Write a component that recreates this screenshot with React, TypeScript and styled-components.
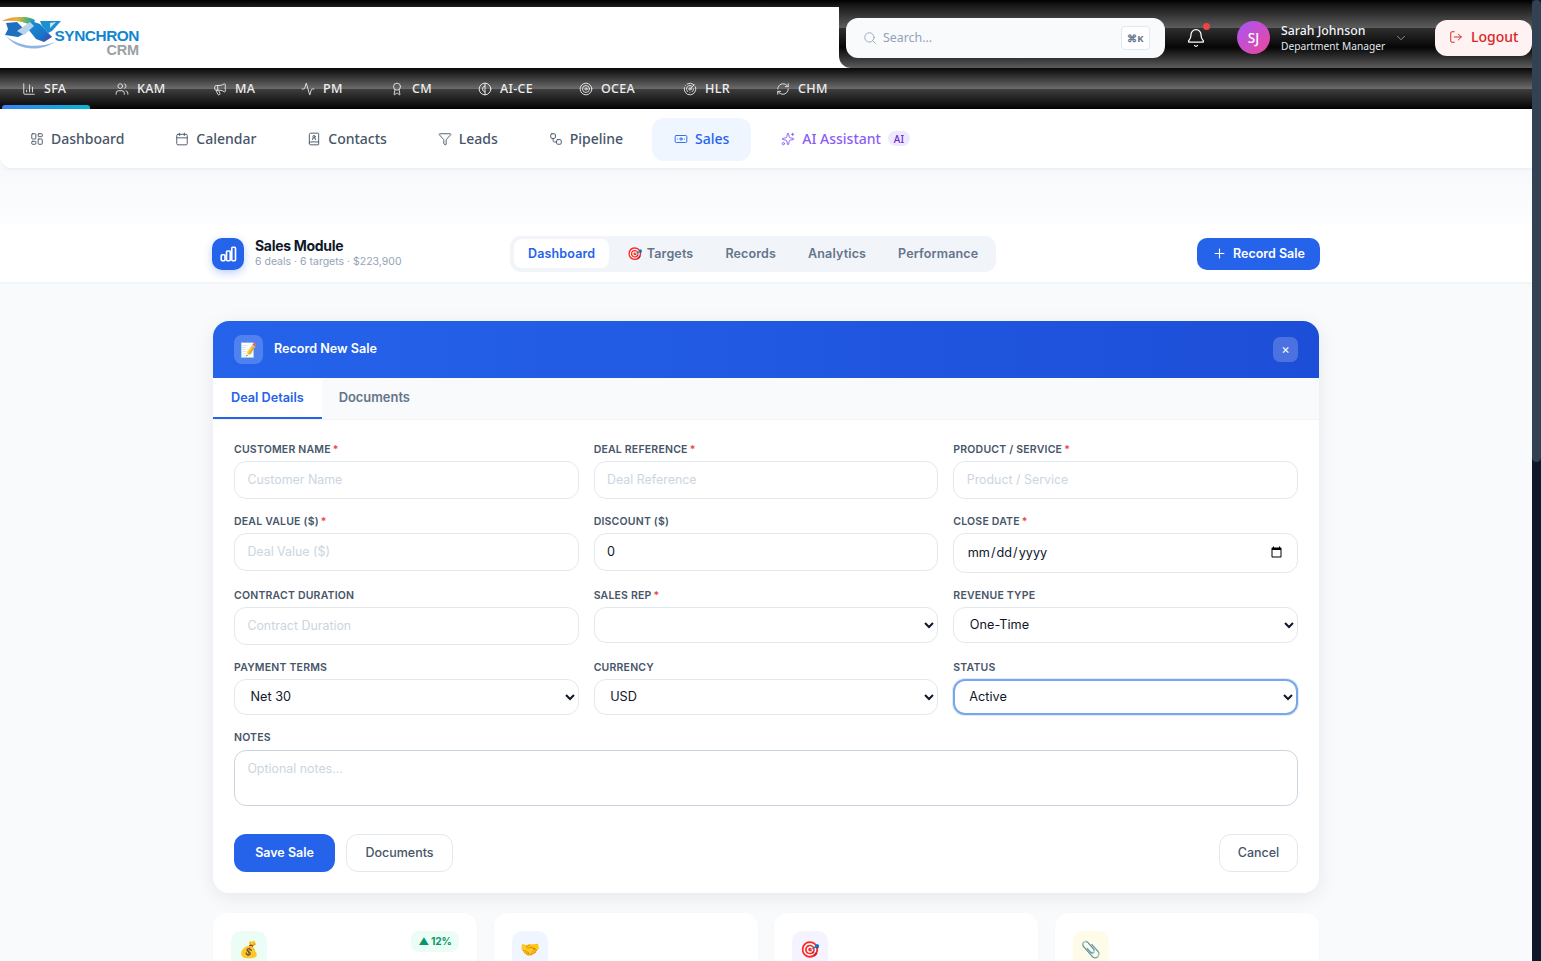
import React from "react";
import styled, { createGlobalStyle } from "styled-components";
import {
  Activity, Award, Banknote, Bell, BookUser, Calendar, ChartColumn, ChevronDown, Funnel,
  LayoutDashboard, LogOut, Megaphone, Plus, Radar, RefreshCw, Search, Sparkles, Target, Users, Workflow,
} from "lucide-react";

const Global = createGlobalStyle`
  html, body { margin: 0; padding: 0; height: 961px; overflow: hidden; background: #f8fafc; }
  * { box-sizing: border-box; }
  body { font-family: "Inter", "Liberation Sans", sans-serif; }
  input::placeholder, textarea::placeholder { color: #cbd5e1; opacity: 1; font-size: 12.4px; }
`;

const Shell = styled.div`display: flex; width: 1541px; height: 961px; overflow: hidden;`;
const Page = styled.div`width: 1532px; height: 961px; overflow: hidden; flex: none; background: #f8fafc;`;
const ScrollTrack = styled.div`width: 9px; flex: none; height: 961px; background: #0f172a;`;
const ScrollThumb = styled.div`width: 9px; height: 462px; background: #334155; border-radius: 5px;`;

const TopStrip = styled.div`height: 7px; background: linear-gradient(180deg, #000, #1e1e1e);`;
const Header = styled.header`display: flex; height: 61px; background: #fff;`;
const LogoArea = styled.div`width: 839px; flex: none; display: flex; align-items: flex-start; position: relative;`;
const LogoText = styled.div`
  position: absolute; left: 49px; top: 21px; font-family: "Liberation Sans", sans-serif; font-weight: 700;
  color: #1186cf; font-size: 15.4px; line-height: 16px; letter-spacing: -0.45px; width: 90px; text-align: right;
`;
const LogoSub = styled.div`color: #9aa0a6; font-size: 14.5px; line-height: 13px; letter-spacing: -0.2px;`;
const DarkArea = styled.div`
  flex: 1; display: flex; align-items: center; position: relative; min-width: 0; padding-left: 7px;
  border-bottom-left-radius: 12px;
  background: linear-gradient(180deg, #1c1c1c 0%, #5c5c5c 34%, #2e2e2e 35%, #060606 66%, #5c5c5c 100%);
`;
const SearchBox = styled.div`
  width: 319px; height: 40px; border-radius: 12px; background: #f8fafc; display: flex; align-items: center;
  padding: 0 15px 0 17px; color: #94a3b8; flex: none; margin-top: 1px;
`;
const SearchText = styled.span`flex: 1; margin: -2px 0 0 6px; font: 400 12.4px "Noto Sans", sans-serif; color: #94a3b8;`;
const Kbd = styled.span`
  width: 29px; height: 24px; background: #fff; border: 1px solid #e2e8f0; border-radius: 4px; color: #64748b;
  display: flex; align-items: center; justify-content: center; font: 700 9.5px "Noto Sans", sans-serif;
`;
const BellWrap = styled.div`position: relative; margin-left: 21px; width: 20px; height: 20px; color: #fff; display: flex;`;
const BellDot = styled.span`
  position: absolute; top: -5px; right: -4px; width: 7px; height: 7px; border-radius: 50%; background: #ef4444;
`;
const Avatar = styled.div`
  width: 33px; height: 33px; margin-left: 31px; border-radius: 50%; flex: none; color: #fff;
  background: linear-gradient(135deg, #a855f7, #ec4899);
  display: flex; align-items: center; justify-content: center; font: 500 13.5px "Noto Sans", sans-serif;
`;
const UserInfo = styled.div`margin: 1px 0 0 11px; width: 112px; color: #fff; font-family: "Noto Sans", sans-serif;`;
const UserName = styled.div`font-size: 12.3px; font-weight: 500; line-height: 16px; color: #f1f5f9;`;
const UserRole = styled.div`font-size: 10.2px; line-height: 15px; color: #e2e8f0; white-space: nowrap;`;
const Chevron = styled.span`display: flex; color: #94a3b8; margin-left: 3px;`;
const LogoutBtn = styled.button`
  margin-left: 27px; width: 97px; height: 36px; flex: none; border: none; border-radius: 12px; background: #fef2f2;
  color: #dc2626; display: flex; align-items: center; gap: 8px; padding: 0 0 2px 14px;
  font: 500 14px "Noto Sans", sans-serif;
`;

const ModuleBar = styled.nav`
  height: 41px; display: flex; padding-left: 2px; font-family: "Noto Sans", sans-serif;
  background: linear-gradient(180deg, #080808 0%, #6a6a6a 50%, #404040 50%, #030303 100%);
`;
const ModuleItem = styled.div<{ $w: number; $active?: boolean }>`
  width: ${(p) => p.$w}px; flex: none; height: 41px; display: flex; align-items: center; gap: 8px; padding-left: 20px;
  color: #eeeeee; font-size: 12.5px; font-weight: 500; position: relative; letter-spacing: 0.3px;
  &::after {
    content: ""; display: ${(p) => (p.$active ? "block" : "none")}; position: absolute; left: 0; right: 5px; bottom: 0;
    height: 4px; border-radius: 3px 3px 0 0; background: linear-gradient(90deg, #3b82f6, #06b6d4);
  }
`;

const SubBar = styled.nav`
  height: 59px; background: #fff; border-radius: 0 0 0 12px; display: flex; align-items: flex-start; padding: 9px 0 0 8px;
  gap: 6.9px; box-shadow: 0 1px 4px rgba(15,23,42,.06); position: relative; font-family: "Noto Sans", sans-serif;
`;
const SubItem = styled.div<{ $active?: boolean; $ai?: boolean }>`
  height: 43px; display: flex; align-items: center; gap: 7px; padding: 0 22px 2px; border-radius: 12px; white-space: nowrap;
  font-size: 14px; font-weight: 500; margin-left: ${(p) => (p.$ai ? 1 : 0)}px;
  color: ${(p) => (p.$active ? "#2563eb" : p.$ai ? "#8b5cf6" : "#475569")};
  background: ${(p) => (p.$active ? "#eff6ff" : "transparent")};
`;
const AiBadge = styled.span`
  height: 15px; width: 22px; border-radius: 8px; background: #ede9fe; color: #6d28d9; font-size: 10px;
  display: flex; align-items: center; justify-content: center; font-weight: 500;
`;
const Spacer = styled.div`height: 57px; background: linear-gradient(180deg, #f6f8fb, #fdfeff);`;

const SalesBar = styled.div`height: 59px; background: #fff; border-bottom: 2px solid #f1f5f9; display: flex; align-items: center; padding: 0 212px;`;
const SalesIcon = styled.div`
  width: 32px; height: 32px; border-radius: 10px; background: #2563eb; display: flex; align-items: center; justify-content: center;
  box-shadow: 0 3px 8px rgba(37,99,235,.3); flex: none;
`;
const SalesTitleWrap = styled.div`margin: -1px 0 0 11px; width: 148px; flex: none;`;
const SalesTitle = styled.div`font-size: 14px; font-weight: 700; line-height: 16px; color: #0f172a; letter-spacing: -0.3px;`;
const SalesSub = styled.div`font-size: 10.5px; line-height: 15px; color: #94a3b8; white-space: nowrap;`;
const Tabs = styled.div`
  margin-left: 107px; width: 486px; height: 36px; background: #f1f5f9; border-radius: 11px; display: flex; align-items: center; padding: 0 4px; flex: none;
`;
const Tab = styled.div<{ $active?: boolean }>`
  height: 29px; border-radius: 8px; display: flex; align-items: center; font-size: 12.5px; font-weight: 600; white-space: nowrap; letter-spacing: 0.15px;
  color: ${(p) => (p.$active ? "#2563eb" : "#64748b")}; background: ${(p) => (p.$active ? "#fff" : "transparent")};
  padding: 0 ${(p) => (p.$active ? "14px" : "16px")}; margin-right: ${(p) => (p.$active ? 2 : 0)}px;
`;
const RecordBtn = styled.button`
  margin-left: auto; width: 123px; height: 32px; flex: none; border: none; border-radius: 10px; background: #2563eb; color: #fff;
  display: flex; align-items: center; justify-content: center; gap: 6px; font: 600 12.5px "Inter", sans-serif;
`;

const Main = styled.main`padding: 37px 213px 0;`;
const Card = styled.section`
  height: 572px; background: #fff; border-radius: 16px; overflow: hidden; box-shadow: 0 4px 20px rgba(15,23,42,.08);
`;
const CardHead = styled.div`
  height: 57px; padding: 0 21px; display: flex; align-items: center; background: linear-gradient(90deg, #2563eb, #1d4ed8); color: #fff;
`;
const HeadIcon = styled.div`
  width: 29px; height: 29px; border-radius: 8px; background: rgba(255,255,255,.2); display: flex; align-items: center; justify-content: center; font-size: 14px;
`;
const HeadTitle = styled.div`margin: -2px 0 0 11px; font-size: 12.6px; font-weight: 600; flex: 1;`;
const CloseBtn = styled.div`
  width: 25px; height: 25px; border-radius: 7px; background: rgba(255,255,255,.2); display: flex; align-items: center; justify-content: center; font-size: 13px; color: #fff; padding-bottom: 2px;
`;
const FormTabs = styled.div`height: 42px; display: flex; background: #f8fafc; border-bottom: 1px solid #f1f5f9;`;
const FormTab = styled.div<{ $active?: boolean }>`
  padding: 0 ${(p) => (p.$active ? "18px" : "17px")}; height: 41px; display: flex; align-items: center; font-size: ${(p) => (p.$active ? 12.7 : 12.9)}px; font-weight: 600; margin-bottom: -1px;
  color: ${(p) => (p.$active ? "#2563eb" : "#64748b")}; background: ${(p) => (p.$active ? "#fff" : "transparent")};
  border-bottom: 2px solid ${(p) => (p.$active ? "#2563eb" : "transparent")};
`;
const FormBody = styled.div`padding: 21.3px 21px 21px;`;
const Grid = styled.div`display: grid; grid-template-columns: repeat(3, 1fr); column-gap: 15px; row-gap: 14.5px; align-items: start;`;
const Field = styled.div<{ $full?: boolean }>`
  display: flex; flex-direction: column; min-width: 0; ${(p) => (p.$full ? "grid-column: 1 / -1;" : "")}
`;
const Label = styled.label`
  height: 14px; margin-bottom: 6px; padding-top: 1.4px; font-size: 10.5px; line-height: 14px; font-weight: 600; color: #475569; text-transform: uppercase; letter-spacing: 0.2px; white-space: nowrap;
`;
const Req = styled.span`color: #ef4444; margin-left: 2px;`;
const controlBase = `
  width: 100%; border: 1px solid #e2e8f0; border-radius: 12px; background: #fff; font-family: "Inter", sans-serif; font-size: 12.7px; color: #0f172a; outline: none;
`;
const Input = styled.input`${controlBase} height: 37.5px; padding: 0 12.4px 2px;`;
const DateInput = styled.input`${controlBase} height: 39.5px; padding: 0 12.4px 2px;`;
const Select = styled.select<{ $focus?: boolean }>`
  ${controlBase} height: 36px; padding: 0 0 2px 11.5px;
  ${(p) => (p.$focus ? "border: 2px solid #7aa7e8; box-shadow: 0 0 0 1px #dbeafe; padding-left: 10px;" : "")}
`;
const TextArea = styled.textarea`${controlBase} height: 56px; padding: 10px 12.4px; resize: none; border-color: #cbd5e1; display: block;`;
const Actions = styled.div`display: flex; align-items: center; gap: 11px; margin-top: 28px;`;
const PrimaryBtn = styled.button`
  height: 38px; width: 101px; border: none; border-radius: 12px; background: #2563eb; color: #fff; font: 600 12.5px "Inter", sans-serif;
`;
const GhostBtn = styled.button<{ $right?: boolean }>`
  height: 38px; padding: 0; width: ${(p) => (p.$right ? 79 : 107)}px; border: 1px solid #e2e8f0; border-radius: 12px; background: #fff; color: #475569;
  font: 500 12.5px "Inter", sans-serif; ${(p) => (p.$right ? "margin-left: auto;" : "")}
`;

const Stats = styled.div`display: grid; grid-template-columns: repeat(4, 264px); justify-content: space-between; margin-top: 20px;`;
const Stat = styled.div`height: 110px; background: #fff; border-radius: 14px; padding: 18px; display: flex; justify-content: space-between; align-items: flex-start; box-shadow: 0 1px 3px rgba(15,23,42,.03);`;
const StatIcon = styled.div<{ $bg: string }>`
  width: 36px; height: 36px; border-radius: 10px; background: ${(p) => p.$bg}; display: flex; align-items: center; justify-content: center; font-size: 16px;
`;
const Trend = styled.span`
  height: 21px; width: 48px; border-radius: 8px; background: #ecfdf5; color: #059669; font-size: 10.2px; font-weight: 700; display: flex; align-items: center; justify-content: center; letter-spacing: -0.2px; padding-bottom: 2px;
`;

const HemisphereIcon = ({ size = 14 }: { size?: number }) => (
  <svg width={size} height={size} viewBox="0 0 24 24" fill="none" stroke="currentColor" strokeWidth="1.6" strokeLinecap="round" strokeLinejoin="round">
    <circle cx="12" cy="12" r="10" />
    <path d="M12 2v20" />
    <path d="M12 7c-2.5 0-4 2-4 5s1.500 5 4 5" />
  </svg>
);

const modules = [
  { label: "SFA", Icon: ChartColumn, w: 93, active: true },
  { label: "KAM", Icon: Users, w: 98 },
  { label: "MA", Icon: Megaphone, w: 88 },
  { label: "PM", Icon: Activity, w: 89 },
  { label: "CM", Icon: Award, w: 88 },
  { label: "AI-CE", Icon: HemisphereIcon, w: 101 },
  { label: "OCEA", Icon: Target, w: 104 },
  { label: "HLR", Icon: Radar, w: 93 },
  { label: "CHM", Icon: RefreshCw, w: 90 },
];

const subs = [
  { label: "Dashboard", Icon: LayoutDashboard },
  { label: "Calendar", Icon: Calendar },
  { label: "Contacts", Icon: BookUser },
  { label: "Leads", Icon: Funnel },
  { label: "Pipeline", Icon: Workflow },
  { label: "Sales", Icon: Banknote, active: true },
];

const salesTabs = ["Dashboard", "🎯 Targets", "Records", "Analytics", "Performance"];

const Logo = () => (
  <svg width="62" height="40" viewBox="0 9 62 40" style={{ position: "absolute", left: 0, top: 10 }}>
    <defs>
      <linearGradient id="arc" x1="0" x2="1" y1="0" y2="0">
        <stop offset="0" stopColor="#e8842c" />
        <stop offset=".45" stopColor="#f0b13c" />
        <stop offset=".75" stopColor="#58b56b" />
        <stop offset="1" stopColor="#1c8fd0" />
      </linearGradient>
      <linearGradient id="band" x1="0" x2="1" y1="0" y2="1">
        <stop offset="0" stopColor="#1a8fd6" />
        <stop offset=".6" stopColor="#1878c8" />
        <stop offset="1" stopColor="#4a3ea8" />
      </linearGradient>
    </defs>
    <path d="M2 13 C12 8 26 7 35 12 L33 18 C24 13 14 12 2 13Z" fill="url(#arc)" />
    <path d="M6 15 L17 14 L27 24 L18 29 L5 27 L8 21Z" fill="#1f6fc0" />
    <path d="M31 13 L40 16 L52 29 L44 34 L36 31 L28 21Z" fill="url(#band)" />
    <path d="M40 13 L61 13 L52 23 L48 25 L42 18Z" fill="#1c8fd0" />
    <path d="M50 15 L56 14 L50 20Z" fill="#cfe3f4" />
    <path d="M17 23 L30 14 L34 18 L24 27Z" fill="#b7d3ee" />
    <path d="M6 28 C18 38 36 41 55 34 C40 44 18 43 6 28Z" fill="#8db7e2" />
  </svg>
);

const ChartGlyph = () => (
  <svg width="18" height="18" viewBox="0 0 24 24" fill="none" stroke="#fff" strokeWidth="2.2">
    <rect x="3" y="13" width="5" height="8" rx="1.2" />
    <rect x="10" y="8" width="5" height="13" rx="1.2" />
    <rect x="17" y="3" width="5" height="18" rx="1.2" />
  </svg>
);

const field = (label: string, req: boolean, control: React.ReactNode, full?: boolean) => (
  <Field $full={full} key={label}>
    <Label>
      {label}
      {req && <Req>*</Req>}
    </Label>
    {control}
  </Field>
);

export default function App() {
  return (
    <Shell>
      <Global />
      <Page>
        <TopStrip />
        <Header>
          <LogoArea>
            <Logo />
            <LogoText>
              SYNCHRON
              <LogoSub>CRM</LogoSub>
            </LogoText>
          </LogoArea>
          <DarkArea>
            <SearchBox>
              <Search size={14} strokeWidth={1.5} />
              <SearchText>Search...</SearchText>
              <Kbd>⌘K</Kbd>
            </SearchBox>
            <BellWrap>
              <Bell size={20} strokeWidth={1.5} />
              <BellDot />
            </BellWrap>
            <Avatar>SJ</Avatar>
            <UserInfo>
              <UserName>Sarah Johnson</UserName>
              <UserRole>Department Manager</UserRole>
            </UserInfo>
            <Chevron>
              <ChevronDown size={14} strokeWidth={1.5} />
            </Chevron>
            <LogoutBtn>
              <LogOut size={14} strokeWidth={1.7} />
              Logout
            </LogoutBtn>
          </DarkArea>
        </Header>
        <ModuleBar>
          {modules.map((m) => (
            <ModuleItem key={m.label} $w={m.w} $active={m.active}>
              <m.Icon size={14} strokeWidth={1.5} />
              {m.label}
            </ModuleItem>
          ))}
        </ModuleBar>
        <SubBar>
          {subs.map((s) => (
            <SubItem key={s.label} $active={s.active}>
              <s.Icon size={14} strokeWidth={1.6} />
              {s.label}
            </SubItem>
          ))}
          <SubItem $ai>
            <Sparkles size={14} strokeWidth={1.6} />
            AI Assistant
            <AiBadge>AI</AiBadge>
          </SubItem>
        </SubBar>
        <Spacer />
        <SalesBar>
          <SalesIcon>
            <ChartGlyph />
          </SalesIcon>
          <SalesTitleWrap>
            <SalesTitle>Sales Module</SalesTitle>
            <SalesSub>6 deals · 6 targets · $223,900</SalesSub>
          </SalesTitleWrap>
          <Tabs>
            {salesTabs.map((t, i) => (
              <Tab key={t} $active={i === 0}>
                {t}
              </Tab>
            ))}
          </Tabs>
          <RecordBtn>
            <Plus size={15} strokeWidth={1.8} />
            Record Sale
          </RecordBtn>
        </SalesBar>
        <Main>
          <Card>
            <CardHead>
              <HeadIcon>📝</HeadIcon>
              <HeadTitle>Record New Sale</HeadTitle>
              <CloseBtn>×</CloseBtn>
            </CardHead>
            <FormTabs>
              <FormTab $active>Deal Details</FormTab>
              <FormTab>Documents</FormTab>
            </FormTabs>
            <FormBody>
              <Grid>
                {field("Customer Name", true, <Input placeholder="Customer Name" />)}
                {field("Deal Reference", true, <Input placeholder="Deal Reference" />)}
                {field("Product / Service", true, <Input placeholder="Product / Service" />)}
                {field("Deal Value ($)", true, <Input placeholder="Deal Value ($)" />)}
                {field("Discount ($)", false, <Input defaultValue="0" />)}
                {field("Close Date", true, <DateInput type="date" />)}
                {field("Contract Duration", false, <Input placeholder="Contract Duration" />)}
                {field("Sales Rep", true, <Select defaultValue=""><option value=""></option></Select>)}
                {field("Revenue Type", false, <Select defaultValue="One-Time"><option>One-Time</option></Select>)}
                {field("Payment Terms", false, <Select defaultValue="Net 30"><option>Net 30</option></Select>)}
                {field("Currency", false, <Select defaultValue="USD"><option>USD</option></Select>)}
                {field("Status", false, <Select $focus defaultValue="Active"><option>Active</option></Select>)}
                {field("Notes", false, <TextArea placeholder="Optional notes..." />, true)}
              </Grid>
              <Actions>
                <PrimaryBtn>Save Sale</PrimaryBtn>
                <GhostBtn>Documents</GhostBtn>
                <GhostBtn $right>Cancel</GhostBtn>
              </Actions>
            </FormBody>
          </Card>
          <Stats>
            <Stat>
              <StatIcon $bg="#ecfdf5">💰</StatIcon>
              <Trend>▲ 12%</Trend>
            </Stat>
            <Stat>
              <StatIcon $bg="#eff6ff">🤝</StatIcon>
            </Stat>
            <Stat>
              <StatIcon $bg="#f5f3ff">🎯</StatIcon>
            </Stat>
            <Stat>
              <StatIcon $bg="#fefce8">📎</StatIcon>
            </Stat>
          </Stats>
        </Main>
      </Page>
      <ScrollTrack>
        <ScrollThumb />
      </ScrollTrack>
    </Shell>
  );
}
